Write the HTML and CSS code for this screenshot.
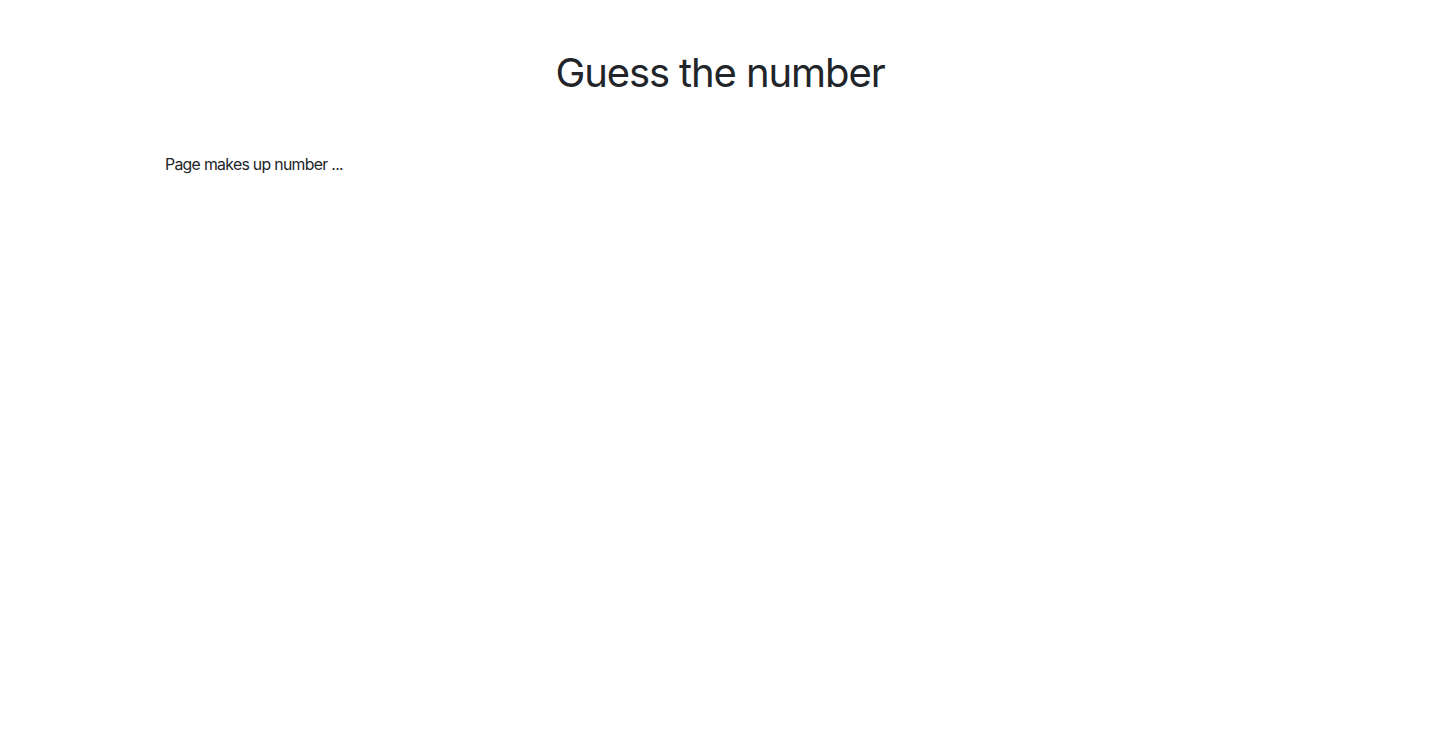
FILE: index.html
```html
<!DOCTYPE html>
<html lang="en">
<head>
<meta charset="utf-8">
<title>Guess the number</title>
<link rel="stylesheet" href="styles.css">
</head>
<body>
<div class="container">
  <h1 class="title">Guess the number</h1>
  <div class="content">
    <p class="status">Page makes up number ...</p>
  </div>
</div>
</body>
</html>
```
FILE: styles.css
```css
html, body {
  margin: 0;
  padding: 0;
  background: #fff;
}
body {
  font-family: Inter, "Noto Sans", sans-serif;
  font-size: 16px;
  line-height: 1.5;
  color: #212529;
}
.container {
  max-width: 1140px;
  margin: 0 auto;
  padding: 0 15px;
  box-sizing: border-box;
}
.title {
  margin: 0;
  padding-top: 49px;
  text-align: center;
  font-weight: 400;
  font-size: 40px;
  line-height: 1.2;
  letter-spacing: -1.1px;
}
.content {
  padding-top: 56px;
}
.status {
  margin: 0;
  letter-spacing: -0.68px;
  font-size: 15.8px;
}
```
